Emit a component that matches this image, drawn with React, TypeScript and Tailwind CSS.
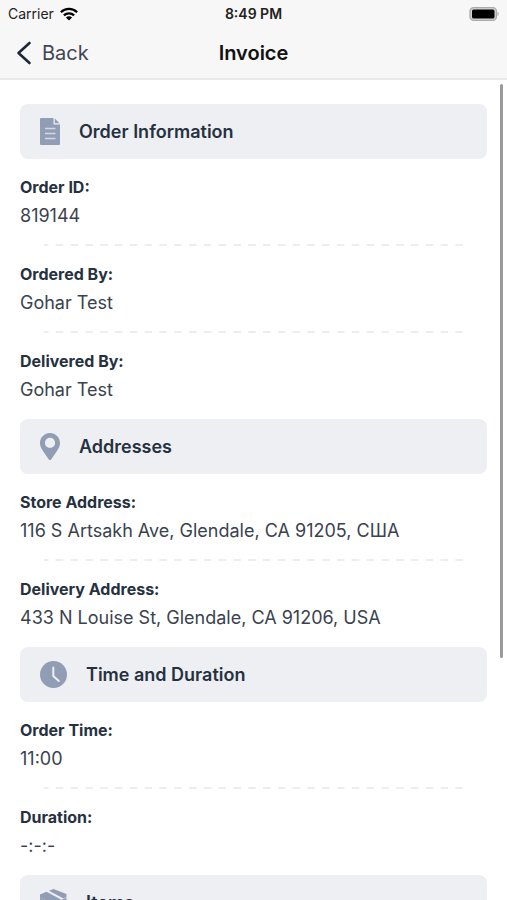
import React from "react";

type Field = { label: string; value: string };

const DocIcon = () => (
    <svg viewBox="0 0 20 27" className="h-[27px] w-5 shrink-0" aria-hidden="true">
        <path d="M1 0h12.500v6.500h6.500v19.500a1 1 0 0 1-1 1H1a1 1 0 0 1-1-1V1a1 1 0 0 1 1-1z" fill="#919db5" />
        <path d="M14.800 0.500L19.500 5.200H14.800z" fill="#919db5" />
        <path d="M5 10.500h10.500M5 15.500h10.500M5 20.500h10.500" stroke="#d3d9e4" strokeWidth="1.600" />
    </svg>
);

const PinIcon = () => (
    <svg viewBox="0 0 20 27" className="h-[27px] w-5 shrink-0" aria-hidden="true">
        <path
            fillRule="evenodd"
            d="M10 0C4.500 0 0 4.400 0 9.900c0 4.100 2 6.600 8.800 16.500a1.450 1.450 0 0 0 2.400 0C18 16.500 20 14 20 9.900 20 4.400 15.500 0 10 0zm0 4.800a5.100 5.100 0 1 1 0 10.200A5.100 5.100 0 0 1 10 4.800z"
            fill="#919db5"
        />
    </svg>
);

const ClockIcon = () => (
    <svg viewBox="0 0 27 27" className="size-[27px] shrink-0" aria-hidden="true">
        <circle cx="13.500" cy="13.500" r="13.500" fill="#919db5" />
        <path d="M13.300 6.500v8.500l5.500 5" fill="none" stroke="#eceff3" strokeWidth="2" strokeLinecap="round" strokeLinejoin="round" />
    </svg>
);

const BoxIcon = () => (
    <svg viewBox="0 0 27 27" className="size-[27px] shrink-0" aria-hidden="true">
        <path d="M0 5.500L6.500 2.700L21 10.500L13.500 14.500L0 8.500z" fill="#919db5" />
        <path d="M9 1.700L13.500 0L26.500 5V8L23.500 9.500z" fill="#919db5" />
        <path d="M0 8.400L13 14V27L0 21.500zM14.500 14L26.500 8.500V21.500L14.500 27z" fill="#919db5" />
    </svg>
);

const sections: { title: string; icon: React.ReactNode; fields: Field[] }[] = [
    {
        title: "Order Information",
        icon: <DocIcon />,
        fields: [
            { label: "Order ID:", value: "819144" },
            { label: "Ordered By:", value: "Gohar Test" },
            { label: "Delivered By:", value: "Gohar Test" },
        ],
    },
    {
        title: "Addresses",
        icon: <PinIcon />,
        fields: [
            { label: "Store Address:", value: "116 S Artsakh Ave, Glendale, CA 91205, США" },
            { label: "Delivery Address:", value: "433 N Louise St, Glendale, CA 91206, USA" },
        ],
    },
    {
        title: "Time and Duration",
        icon: <ClockIcon />,
        fields: [
            { label: "Order Time:", value: "11:00" },
            { label: "Duration:", value: "-:-:-" },
        ],
    },
    { title: "Items", icon: <BoxIcon />, fields: [] },
];

function StatusBar() {
    return (
        <div className="grid h-7 grid-cols-3 items-center px-2 text-[#222]">
            <div className="flex items-center gap-1.5">
                <span className="text-sm">Carrier</span>
                <svg viewBox="0 0 18 14" className="h-3.5 w-[18px]" aria-hidden="true">
                    <g fill="none" stroke="#000" strokeWidth="2.300">
                        <path d="M0.900 5.200a11.500 11.500 0 0 1 16.200 0" />
                        <path d="M3.900 8.400a7.200 7.200 0 0 1 10.200 0" />
                    </g>
                    <path d="M9 13.600L5.900 10.500a4.400 4.400 0 0 1 6.200 0z" fill="#000" />
                </svg>
            </div>
            <span className="text-center text-sm font-semibold">8:49 PM</span>
            <svg viewBox="0 0 30 14" className="h-3.5 w-[30px] justify-self-end" aria-hidden="true">
                <rect x="1" y="0.700" width="26.400" height="12.600" rx="3.600" fill="#d5d5d5" stroke="#aaa" strokeWidth="1.300" />
                <rect x="3" y="2.500" width="22.500" height="9" rx="1.500" fill="#000" />
                <path d="M28.500 4.800c1.600 0.600 1.600 3.800 0 4.400z" fill="#aaa" />
            </svg>
        </div>
    );
}

function SectionHeader({ title, icon }: { title: string; icon: React.ReactNode }) {
    return (
        <div className="flex h-[55px] items-center gap-[19px] rounded-lg bg-[#edeff3] px-5">
            {icon}
            <h2 className="text-lg font-semibold text-[#263140]">{title}</h2>
        </div>
    );
}

export default function InvoicePage() {
    return (
        <div className="flex h-screen flex-col bg-white font-['Inter',sans-serif]">
            <header className="shrink-0 border-b-2 border-[#e9e9e9] bg-[#f7f7f7]">
                <StatusBar />
                <div className="grid h-[50px] grid-cols-3 items-center px-4">
                    <button type="button" className="flex items-center gap-2.5 justify-self-start text-xl leading-6 text-[#414652]">
                        <svg viewBox="0 0 16 24" className="h-6 w-4" aria-hidden="true">
                            <path d="M13.500 2L2.500 12L13.500 22" fill="none" stroke="#20263a" strokeWidth="2.600" strokeLinecap="round" strokeLinejoin="round" />
                        </svg>
                        Back
                    </button>
                    <h1 className="text-center text-xl leading-6 font-semibold text-[#111]">Invoice</h1>
                </div>
            </header>

            <div className="relative min-h-0 flex-1">
                <main className="h-full overflow-y-auto px-5 pt-6 [scrollbar-width:none]">
                    {sections.map((section) => (
                        <section key={section.title} className="pb-[15px]">
                            <SectionHeader title={section.title} icon={section.icon} />
                            <dl>
                                {section.fields.map((field, i) => (
                                    <div key={field.label}>
                                        {i > 0 && (
                                            <svg className="mx-auto mt-3.5 block h-0.5 w-[calc(100%-48px)]" aria-hidden="true">
                                                <line x1="0" y1="1" x2="100%" y2="1" stroke="#e6e7ea" strokeWidth="1.300" strokeDasharray="7.500 7.300" strokeDashoffset="3" />
                                            </svg>
                                        )}
                                        <dt className="pt-4 text-base leading-6 font-bold text-[#263140]">{field.label}</dt>
                                        <dd className="mt-[3px] text-lg leading-7 text-[#3a424e]">{field.value}</dd>
                                    </div>
                                ))}
                            </dl>
                        </section>
                    ))}
                </main>
                <div className="absolute top-1 right-1 h-[70%] w-[3px] rounded-full bg-[#9b9b9b]" />
            </div>
        </div>
    );
}
